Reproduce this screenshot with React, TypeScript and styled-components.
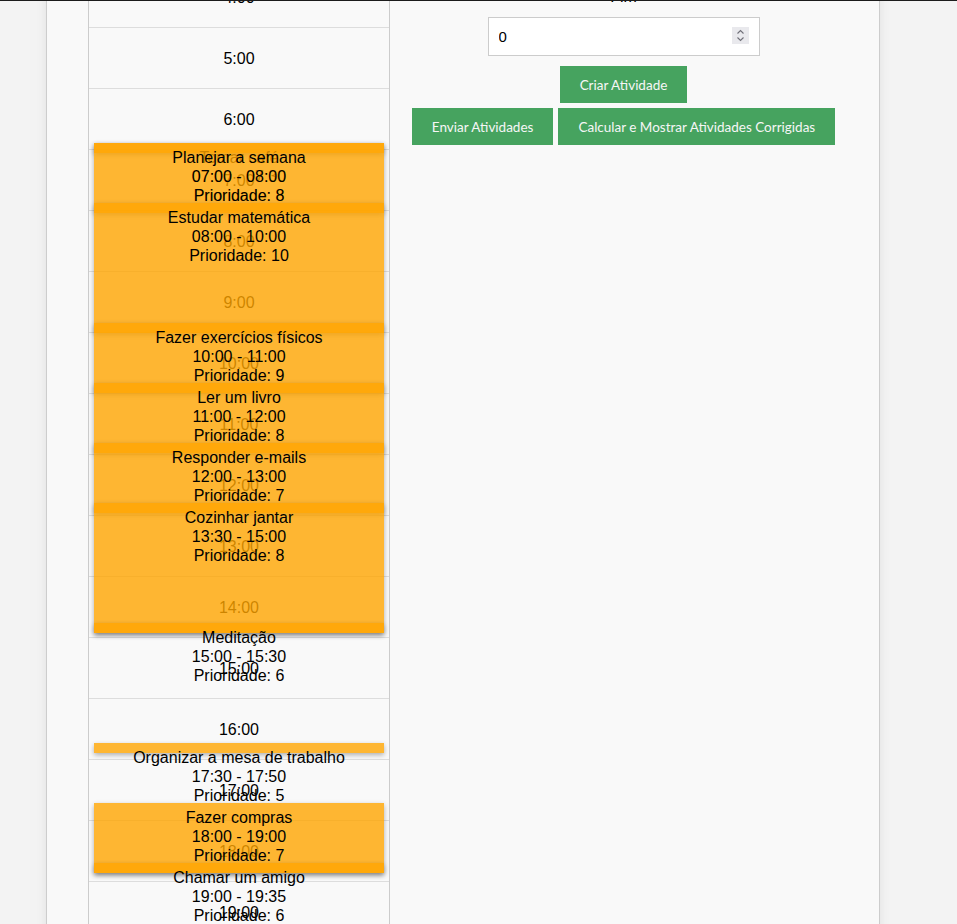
import { useLayoutEffect } from 'react';
import styled, { createGlobalStyle } from 'styled-components';

type Atividade = {
  nome: string;
  inicio: string;
  fim: string;
  prioridade: number;
};

const HORA_ALTURA = 60;

const atividades: Atividade[] = [
  { nome: 'Tomar café', inicio: '07:00', fim: '07:30', prioridade: 8 },
  { nome: 'Planejar a semana', inicio: '07:00', fim: '08:00', prioridade: 8 },
  { nome: 'Estudar matemática', inicio: '08:00', fim: '10:00', prioridade: 10 },
  { nome: 'Fazer exercícios físicos', inicio: '10:00', fim: '11:00', prioridade: 9 },
  { nome: 'Ler um livro', inicio: '11:00', fim: '12:00', prioridade: 8 },
  { nome: 'Responder e-mails', inicio: '12:00', fim: '13:00', prioridade: 7 },
  { nome: 'Cozinhar jantar', inicio: '13:30', fim: '15:00', prioridade: 8 },
  { nome: 'Meditação', inicio: '15:00', fim: '15:30', prioridade: 6 },
  { nome: 'Organizar a mesa de trabalho', inicio: '17:30', fim: '17:50', prioridade: 5 },
  { nome: 'Fazer compras', inicio: '18:00', fim: '19:00', prioridade: 7 },
  { nome: 'Chamar um amigo', inicio: '19:00', fim: '19:35', prioridade: 6 },
];

const horas = Array.from({ length: 24 }, (_, i) => `${i}:00`);

const hora = (t: string) => parseInt(t.split(':')[0], 10);

const Spinner = () => (
  <SpinBox>
    <svg width="17" height="17" viewBox="0 0 17 17" fill="none" stroke="#6f6f78" strokeWidth="1.1">
      <path d="M5.5 6.5 L8.5 3.5 L11.5 6.5" />
      <path d="M5.5 10.5 L8.5 13.5 L11.5 10.5" />
    </svg>
  </SpinBox>
);

const App = () => {
  useLayoutEffect(() => {
    window.scrollTo(0, 297);
  }, []);

  return (
    <>
      <GlobalStyle />
      <TopLine />
      <Page>
        <Container>
          <Timeline>
            {horas.map((h) => (
              <HourRow key={h}>{h}</HourRow>
            ))}
            {atividades.map((a, i) => (
              <ActivityBlock
                key={i}
                style={{
                  top: hora(a.inicio) * HORA_ALTURA,
                  height: (hora(a.fim) - hora(a.inicio)) * HORA_ALTURA,
                }}
              >
                <div>{a.nome}</div>
                <div>
                  {a.inicio} - {a.fim}
                </div>
                <div>Prioridade: {a.prioridade}</div>
              </ActivityBlock>
            ))}
          </Timeline>

          <FormColumn>
            <Field>
              <Label>Nome da Atividade</Label>
              <InputWrap>
                <Input type="text" defaultValue="" />
              </InputWrap>
            </Field>
            <Field>
              <Label>Prioridade</Label>
              <InputWrap>
                <Input type="number" defaultValue={0} />
                <Spinner />
              </InputWrap>
            </Field>
            <Field>
              <Label>Início</Label>
              <InputWrap>
                <Input type="number" defaultValue={0} />
                <Spinner />
              </InputWrap>
            </Field>
            <Field>
              <Label>Fim</Label>
              <InputWrap>
                <Input type="number" defaultValue={0} />
                <Spinner />
              </InputWrap>
            </Field>
            <CreateButton>Criar Atividade</CreateButton>
            <ButtonRow>
              <GreenButton>Enviar Atividades</GreenButton>
              <GreenButton>Calcular e Mostrar Atividades Corrigidas</GreenButton>
            </ButtonRow>
          </FormColumn>
        </Container>
      </Page>
    </>
  );
};

const GlobalStyle = createGlobalStyle`
  html {
    scrollbar-width: none;
  }
  html::-webkit-scrollbar {
    display: none;
  }
  body {
    margin: 0;
    background-color: #f3f3f3;
    font-family: "Liberation Sans", Arial, sans-serif;
    color: #000;
  }
`;

const TopLine = styled.div`
  position: fixed;
  top: 0;
  left: 0;
  right: 0;
  height: 1px;
  background-color: #1c1c1c;
  z-index: 10;
`;

const Page = styled.div`
  padding-left: 46px;
`;

const Container = styled.div`
  display: flex;
  box-sizing: border-box;
  width: 834px;
  padding: 20px 0 40px 41px;
  background-color: #f9f9f9;
  border-left: 1px solid #cdcdcd;
  border-right: 1px solid #cdcdcd;
  box-shadow: 0 0 10px rgba(0, 0, 0, 0.08);
`;

const Timeline = styled.div`
  position: relative;
  flex-shrink: 0;
  box-sizing: border-box;
  width: 302px;
  border-left: 1px solid #cccccc;
  border-right: 1px solid #cccccc;
`;

const HourRow = styled.div`
  display: flex;
  align-items: center;
  justify-content: center;
  box-sizing: border-box;
  height: 61px;
  padding-top: 2px;
  border-bottom: 1px solid #dddddd;
  font-size: 16px;
`;

const ActivityBlock = styled.div`
  position: absolute;
  left: 5px;
  right: 5px;
  padding: 5px 0;
  background-color: rgba(255, 165, 0, 0.8);
  box-shadow: 0 2px 5px rgba(0, 0, 0, 0.3);
  text-align: center;
  font-size: 16px;
  line-height: 19px;
  color: #000;
`;

const FormColumn = styled.div`
  flex: 1;
  padding: 31px 22px 0 0;
  display: flex;
  flex-direction: column;
  align-items: center;
`;

const Field = styled.div`
  display: flex;
  flex-direction: column;
  align-items: center;
`;

const Label = styled.label`
  display: block;
  font-size: 16px;
  line-height: 18px;
  margin-bottom: 11px;
`;

const InputWrap = styled.div`
  position: relative;
  margin-bottom: 10px;
`;

const Input = styled.input`
  display: block;
  box-sizing: border-box;
  width: 272px;
  height: 39px;
  padding: 0 10px;
  border: 1px solid #cccccc;
  background-color: #fff;
  font-family: "Liberation Sans", Arial, sans-serif;
  font-size: 15px;
  color: #000;
  outline: none;
  -moz-appearance: textfield;

  &::-webkit-inner-spin-button,
  &::-webkit-outer-spin-button {
    -webkit-appearance: none;
    margin: 0;
  }
`;

const SpinBox = styled.span`
  position: absolute;
  top: 10px;
  right: 11px;
  width: 17px;
  height: 17px;
  background-color: #e9e9ed;
  pointer-events: none;

  svg {
    display: block;
  }
`;

const GreenButton = styled.button`
  height: 37px;
  padding: 0 20px;
  border: none;
  background-color: #46a35f;
  color: #f6f6f6;
  font-family: Lato, "Liberation Sans", sans-serif;
  font-size: 13.5px;
  cursor: pointer;
`;

const CreateButton = styled(GreenButton)`
  display: block;
`;

const ButtonRow = styled.div`
  display: flex;
  justify-content: center;
  gap: 5px;
  margin-top: 5px;
`;

export default App;
